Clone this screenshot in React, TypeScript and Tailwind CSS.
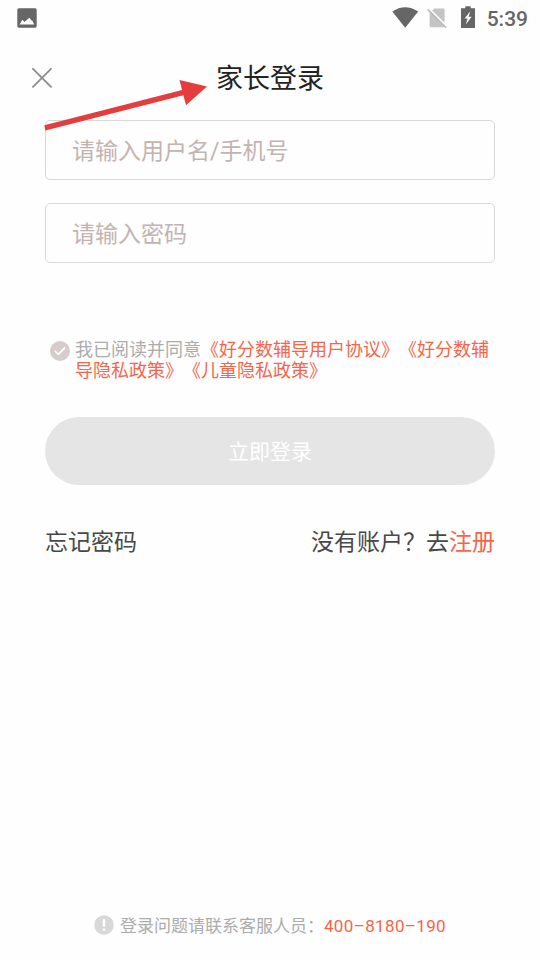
const agreements = [
  "《好分数辅导用户协议》",
  "《好分数辅导隐私政策》",
  "《儿童隐私政策》",
];

const fields = [
  { type: "text", placeholder: "请输入用户名/手机号" },
  { type: "password", placeholder: "请输入密码" },
];

function StatusBar() {
  return (
    <div className="flex h-9 items-center pr-3 pl-[17px] text-[#666666]">
      <svg width="20" height="20" viewBox="0 0 20 20">
        <rect x="0.3" y="0.3" width="19.4" height="19.4" rx="1.6" fill="currentColor" />
        <path d="M2.6 16.4 L5.4 11.8 L7.4 14 L9.4 12.2 L12.4 9.8 L14.4 12.6 L15.2 12.4 L17.2 16.4 Z" fill="#fff" />
      </svg>
      <div className="ml-auto flex items-center">
        <svg className="mb-0.5" width="27" height="21" viewBox="0 0 27 21">
          <path d="M0.3 4.6 Q13.2 -4 26.2 4.6 L13.2 20.8 Z" fill="currentColor" />
        </svg>
        <svg className="ml-2" width="21" height="21" viewBox="0 0 21 21">
          <path d="M7.2 0.5 H16.4 Q17.6 0.5 17.6 1.8 V18 Q17.6 19.2 16.4 19.2 H4 Q2.6 19.2 2.6 17.8 V5 Z" fill="#c4c4c4" />
          <path d="M1.4 0 L20 18.4" stroke="#fff" strokeWidth="1.7" />
          <path d="M0.6 1.3 L19 19.6" stroke="#bdbdbd" strokeWidth="1.7" />
        </svg>
        <svg className="mb-0.5 ml-[13px] h-[22px] w-[14px]" viewBox="0 0 14 22">
          <path d="M4.3 0.2 H9.7 V2.2 H14 V22 H0 V2.2 H4.3 Z" fill="currentColor" />
          <path d="M9.4 5.2 L3.6 12.6 H6.6 L4.8 18.6 L10.6 10.8 H7.6 Z" fill="#fff" />
        </svg>
        <span className="mt-0.5 ml-3 text-[21px] leading-none font-medium">5:39</span>
      </div>
    </div>
  );
}

function PointerArrow() {
  return (
    <svg
      className="pointer-events-none absolute top-[76px] left-10"
      width="170"
      height="58"
      viewBox="0 0 170 58"
      fill="#e43d3d"
    >
      <path d="M4.4 49.2 L143 13.8 L144.4 19 L5.4 54.4 Z" />
      <path d="M139.5 4 L167 10.4 L146 29.2 Z" />
    </svg>
  );
}

export default function App() {
  return (
    <div className="relative flex h-[960px] w-[540px] flex-col bg-[#fefefe] font-['Roboto','Noto_Sans_CJK_SC',sans-serif] [text-spacing-trim:space-all]">
      <StatusBar />

      <header className="grid h-[84px] grid-cols-[1fr_auto_1fr] items-center px-8">
        <button type="button" aria-label="关闭">
          <svg width="20" height="20" viewBox="0 0 20 20" stroke="#8f8f8f" strokeWidth="1.9" strokeLinecap="round">
            <path d="M1 0.8 L19 18.8 M19 0.8 L1 18.8" />
          </svg>
        </button>
        <h1 className="pt-0.5 text-[27px] leading-10 text-[#222222]">家长登录</h1>
      </header>

      <main className="px-[45px]">
        <div className="flex flex-col gap-[23px]">
          {fields.map((field) => (
            <input
              key={field.type}
              type={field.type}
              placeholder={field.placeholder}
              className="h-[60px] w-full rounded-[5px] border border-[#d8d8d8] px-[26px] pt-0.5 text-[23px] outline-none placeholder:text-[#c3b3b1]"
            />
          ))}
        </div>

        <div className="mt-[76px] flex pl-[5px]">
          <svg className="mt-0.5 shrink-0" width="20" height="20" viewBox="0 0 20 20">
            <circle cx="10" cy="10" r="10" fill="#d5cccb" />
            <path d="M4.8 9.8 L8.4 13.4 L15.2 6.4" fill="none" stroke="#fff" strokeWidth="1.7" />
          </svg>
          <p className="ml-[5px] w-[418px] shrink-0 text-[18px] leading-[21px] break-all text-[#acacac] [line-break:anywhere]">
            我已阅读并同意
            <span className="text-[#f76549]">{agreements.join("")}</span>
          </p>
        </div>

        <button
          type="button"
          className="mt-9 h-[68px] w-full rounded-full bg-[#e5e5e5] pt-[3px] text-[21px] text-white"
        >
          立即登录
        </button>

        <div className="mt-[41px] flex justify-between text-[23px] leading-[34px] text-[#484848]">
          <a>忘记密码</a>
          <p>
            没有账户？去<a className="text-[#f76549]">注册</a>
          </p>
        </div>
      </main>

      <footer className="mt-auto mb-[21px] flex items-center justify-center text-[17px] leading-[26px] text-[#acacac]">
        <svg className="mb-0.5" width="20" height="20" viewBox="0 0 20 20">
          <circle cx="10" cy="10" r="9.8" fill="#d8d8d8" />
          <path d="M10 4.2 V11.8 M10 13.6 V15.8" stroke="#fff" strokeWidth="2.4" />
        </svg>
        <span className="ml-1.5">登录问题请联系客服人员：</span>
        <span className="pt-px tracking-[0.35px] text-[#f76549]">400–8180–190</span>
      </footer>

      <PointerArrow />
    </div>
  );
}
